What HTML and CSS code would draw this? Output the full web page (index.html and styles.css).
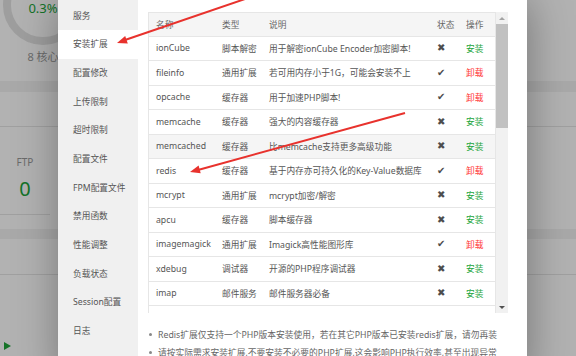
FILE: index.html
```html
<!DOCTYPE html>
<html lang="zh-CN">
<head>
    <meta charset="UTF-8">
    <meta name="viewport" content="width=device-width, initial-scale=1.0">
    <title>PHP管理</title>
    <link rel="stylesheet" href="styles.css">
</head>
<body>
    <div class="page">
        <section class="card card-top">
            <div class="gauge">
                <div class="ring"><span class="gauge-val">0.3%</span></div>
                <span class="gauge-label">8 核心</span>
            </div>
        </section>
        <section class="card card-mid">
            <div class="card-head"></div>
            <div class="stat">
                <span class="stat-name">FTP</span>
                <span class="stat-num">0</span>
            </div>
        </section>
        <section class="card card-bottom">
            <div class="card-head"></div>
            <div class="card-foot"><span class="play"></span></div>
        </section>
    </div>

    <div class="mask"></div>

    <div class="layer">
        <ul class="side-menu">
            <li>服务</li>
            <li class="on">安装扩展</li>
            <li>配置修改</li>
            <li>上传限制</li>
            <li>超时限制</li>
            <li>配置文件</li>
            <li>FPM配置文件</li>
            <li>禁用函数</li>
            <li>性能调整</li>
            <li>负载状态</li>
            <li>Session配置</li>
            <li>日志</li>
        </ul>
        <div class="soft-con">
            <div class="table-wrap">
                <div class="table-scroll">
                    <table class="ext-table">
                        <colgroup>
                            <col class="c-name"><col class="c-type"><col class="c-desc"><col class="c-state"><col class="c-op">
                        </colgroup>
                        <thead>
                            <tr><th>名称</th><th>类型</th><th>说明</th><th>状态</th><th>操作</th></tr>
                        </thead>
                        <tbody>
                            <tr><td>ionCube</td><td>脚本解密</td><td>用于解密ionCube Encoder加密脚本!</td><td><span class="no">✖</span></td><td><a class="btn-add">安装</a></td></tr>
                            <tr><td>fileinfo</td><td>通用扩展</td><td>若可用内存小于1G，可能会安装不上</td><td><span class="yes">✔</span></td><td><a class="btn-del">卸载</a></td></tr>
                            <tr><td>opcache</td><td>缓存器</td><td>用于加速PHP脚本!</td><td><span class="yes">✔</span></td><td><a class="btn-del">卸载</a></td></tr>
                            <tr><td>memcache</td><td>缓存器</td><td>强大的内容缓存器</td><td><span class="no">✖</span></td><td><a class="btn-add">安装</a></td></tr>
                            <tr class="hover"><td>memcached</td><td>缓存器</td><td>比memcache支持更多高级功能</td><td><span class="no">✖</span></td><td><a class="btn-add">安装</a></td></tr>
                            <tr><td>redis</td><td>缓存器</td><td>基于内存亦可持久化的Key-Value数据库</td><td><span class="yes">✔</span></td><td><a class="btn-del">卸载</a></td></tr>
                            <tr><td>mcrypt</td><td>通用扩展</td><td>mcrypt加密/解密</td><td><span class="no">✖</span></td><td><a class="btn-add">安装</a></td></tr>
                            <tr><td>apcu</td><td>缓存器</td><td>脚本缓存器</td><td><span class="no">✖</span></td><td><a class="btn-add">安装</a></td></tr>
                            <tr><td>imagemagick</td><td>通用扩展</td><td>Imagick高性能图形库</td><td><span class="yes">✔</span></td><td><a class="btn-del">卸载</a></td></tr>
                            <tr><td>xdebug</td><td>调试器</td><td>开源的PHP程序调试器</td><td><span class="no">✖</span></td><td><a class="btn-add">安装</a></td></tr>
                            <tr><td>imap</td><td>邮件服务</td><td>邮件服务器必备</td><td><span class="no">✖</span></td><td><a class="btn-add">安装</a></td></tr>
                        </tbody>
                    </table>
                </div>
                <div class="scrollbar">
                    <span class="sb-btn sb-up"></span>
                    <span class="sb-thumb"></span>
                    <span class="sb-space"></span>
                    <span class="sb-btn sb-down"></span>
                </div>
            </div>
            <ul class="help-list">
                <li>Redis扩展仅支持一个PHP版本安装使用，若在其它PHP版本已安装redis扩展，请勿再装</li>
                <li>请按实际需求安装扩展,不要安装不必要的PHP扩展,这会影响PHP执行效率,甚至出现异常</li>
            </ul>
        </div>
    </div>

    <!-- annotation arrows drawn over the screenshot -->
    <svg class="marks" width="576" height="356" viewBox="0 0 576 356">
        <line x1="245" y1="-1" x2="125" y2="40" stroke="#e8322d" stroke-width="2"/>
        <polygon points="117,43 127.8,43.6 125.2,36" fill="#e8322d"/>
        <line x1="405" y1="113" x2="198" y2="170" stroke="#e8322d" stroke-width="2"/>
        <polygon points="190,172 200.7,173.2 198.6,165.5" fill="#e8322d"/>
    </svg>
</body>
</html>
```

FILE: styles.css
```css
* {
    box-sizing: border-box;
}

body {
    margin: 0;
    width: 576px;
    height: 356px;
    overflow: hidden;
    position: relative;
    background-color: #f2f2f2;
    font-family: "Noto Sans", "Noto Sans CJK SC", sans-serif;
}

/* page behind the dialog */
.page {
    display: flex;
    flex-direction: column;
    height: 356px;
}

.card {
    background-color: #fff;
}

.card-top {
    height: 81px;
    overflow: hidden;
}

.card-mid {
    height: 137px;
    margin-top: 11px;
}

.card-bottom {
    flex: 1;
    margin-top: 10px;
    display: flex;
    flex-direction: column;
}

.card-head {
    height: 36px;
    border-bottom: 1px solid #e6e6e6;
}

.card-mid .card-head {
    height: 35px;
}

.gauge {
    width: 80px;
    margin: -35px 0 0 3px;
    display: flex;
    flex-direction: column;
    align-items: center;
}

.ring {
    width: 80px;
    height: 80px;
    border-radius: 50%;
    border: 8px solid #e3e3e3;
    display: flex;
    align-items: center;
    justify-content: center;
    padding-top: 6px;
}

.gauge-val {
    color: #20a53a;
    font-size: 13px;
}

.gauge-label {
    margin-top: 6px;
    line-height: 12px;
    font-size: 11px;
    color: #999;
}

.stat {
    width: 50px;
    margin-top: 15px;
    padding: 13px 0;
    display: flex;
    flex-direction: column;
    align-items: center;
    gap: 8px;
    border-bottom: 1px solid #e6e6e6;
}

.stat-name {
    font-size: 10px;
    line-height: 14px;
    color: #999;
}

.stat-num {
    font-size: 20px;
    line-height: 24px;
    color: #20a53a;
}

.card-foot {
    flex: 1;
    display: flex;
    align-items: flex-end;
    padding: 0 0 6px 4px;
}

.play {
    width: 0;
    height: 0;
    border-top: 4px solid transparent;
    border-bottom: 4px solid transparent;
    border-left: 7px solid #20a53a;
}

.mask {
    position: absolute;
    inset: 0;
    background-color: rgba(0, 0, 0, 0.3);
}

/* dialog */
.layer {
    position: absolute;
    left: 58px;
    top: 0;
    width: 469px;
    height: 380px;
    background-color: #fff;
    box-shadow: 1px 1px 40px rgba(0, 0, 0, 0.35);
    display: flex;
}

.side-menu {
    width: 80px;
    margin: 0;
    padding: 1.6px 0 0;
    list-style: none;
    background-color: #f0f0f0;
}

.side-menu li {
    height: 28.7px;
    line-height: 28.7px;
    padding-left: 15px;
    font-size: 8.7px;
    color: #555;
    white-space: nowrap;
}

.side-menu li.on {
    background-color: #fff;
}

.soft-con {
    flex: 1;
    padding: 12px 19px 0 10px;
}

.table-wrap {
    display: flex;
    height: 301px;
}

.table-scroll {
    width: 348px;
    overflow: hidden;
    border: 1px solid #e6e6e6;
    border-bottom: none;
}

.ext-table {
    width: 100%;
    table-layout: fixed;
    border-collapse: collapse;
    font-size: 8.7px;
    color: #555;
}

.c-name { width: 66px; }
.c-type { width: 47px; }
.c-desc { width: 168px; }
.c-state { width: 29px; }
.c-op { width: 36px; }

.ext-table th {
    height: 23px;
    padding: 0 7px;
    text-align: left;
    font-weight: normal;
    color: #666;
    white-space: nowrap;
    background-color: #f5f5f5;
    border-bottom: 1px solid #e6e6e6;
}

.ext-table td {
    height: 24.5px;
    padding: 0 7px;
    white-space: nowrap;
    overflow: hidden;
    border-bottom: 1px solid #e6e6e6;
}

.ext-table th:nth-child(4),
.ext-table td:nth-child(4) {
    padding: 0 0 0 7px;
    overflow: visible;
}

.ext-table tr.hover td {
    background-color: #f5f5f5;
}

.yes,
.no {
    font-family: "DejaVu Sans", sans-serif;
    font-size: 10px;
    color: #4d4d4d;
}

.btn-add {
    color: #20a53a;
}

.btn-del {
    color: #f33;
}

.scrollbar {
    width: 12px;
    display: flex;
    flex-direction: column;
    background-color: #f1f1f1;
}

.sb-btn {
    height: 12px;
    display: flex;
    align-items: center;
    justify-content: center;
}

.sb-btn::after {
    content: "";
    border-left: 3px solid transparent;
    border-right: 3px solid transparent;
}

.sb-up::after {
    border-bottom: 3px solid #a3a3a3;
}

.sb-down::after {
    border-top: 3px solid #505050;
}

.sb-thumb {
    height: 104px;
    background-color: #c1c1c1;
}

.sb-space {
    flex: 1;
}

.help-list {
    margin: 13px 0 0;
    padding: 0;
    list-style: none;
    font-size: 8.75px;
    line-height: 18px;
    color: #666;
    white-space: nowrap;
}

.help-list li {
    padding-left: 1px;
}

.help-list li::before {
    content: "";
    display: inline-block;
    width: 3px;
    height: 3px;
    border-radius: 50%;
    background-color: #888;
    margin: 0 6px 2px 0;
    vertical-align: middle;
}

.marks {
    position: absolute;
    left: 0;
    top: 0;
    pointer-events: none;
}
```
